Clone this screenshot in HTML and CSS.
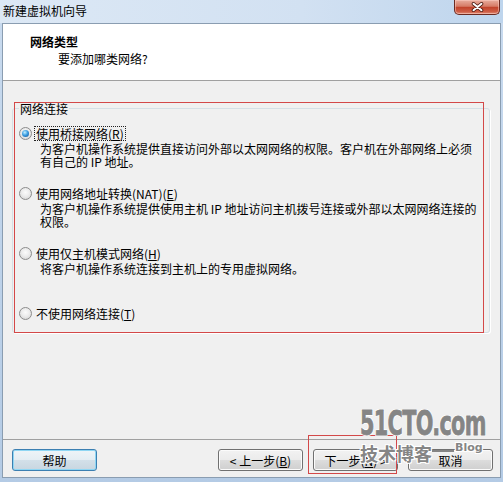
FILE: index.html
```html
<!DOCTYPE html>
<html lang="zh-CN">
<head>
  <meta charset="UTF-8" />
  <title>新建虚拟机向导</title>
  <link rel="stylesheet" href="styles.css">
</head>
<body>
  <div class="window">
    <div class="titlebar">
      <span class="title">新建虚拟机向导</span>
      <span class="close">
        <svg width="13" height="10" viewBox="-6.5 -5 13 10">
          <path d="M-4 -3.2 L4 3.2 M4 -3.2 L-4 3.2" stroke="#4a1a12" stroke-width="3.6" stroke-linecap="round" fill="none"/>
          <path d="M-4 -3.2 L4 3.2 M4 -3.2 L-4 3.2" stroke="#fff" stroke-width="2" stroke-linecap="round" fill="none"/>
        </svg>
      </span>
    </div>

    <div class="client">
      <div class="header">
        <div class="header-title">网络类型</div>
        <div class="header-sub">要添加哪类网络?</div>
      </div>

      <div class="content">
        <fieldset class="group">
          <legend>网络连接</legend>

          <div class="option">
            <div class="option-label">
              <span class="radio checked"></span>
              <span class="label-text focus">使用桥接网络(<u>R</u>)</span>
            </div>
            <div class="option-desc">为客户机操作系统提供直接访问外部以太网网络的权限。客户机在外部网络上必须有自己的 IP 地址。</div>
          </div>

          <div class="option">
            <div class="option-label">
              <span class="radio"></span>
              <span class="label-text">使用网络地址转换(NAT)(<u>E</u>)</span>
            </div>
            <div class="option-desc">为客户机操作系统提供使用主机 IP 地址访问主机拨号连接或外部以太网网络连接的权限。</div>
          </div>

          <div class="option">
            <div class="option-label">
              <span class="radio"></span>
              <span class="label-text">使用仅主机模式网络(<u>H</u>)</span>
            </div>
            <div class="option-desc">将客户机操作系统连接到主机上的专用虚拟网络。</div>
          </div>

          <div class="option last">
            <div class="option-label">
              <span class="radio"></span>
              <span class="label-text">不使用网络连接(<u>T</u>)</span>
            </div>
          </div>
        </fieldset>
      </div>

      <div class="footer">
        <button class="btn default">帮助</button>
        <div class="spacer"></div>
        <button class="btn">&lt; 上一步(<u>B</u>)</button>
        <button class="btn">下一步(<u>N</u>) &gt;</button>
        <button class="btn">取消</button>
      </div>
    </div>

    <!-- annotation boxes drawn over the screenshot -->
    <div class="annot annot-group"></div>
    <div class="annot annot-next"></div>

    <div class="watermark">
      <div class="wm-site">51CTO.com</div>
      <div class="wm-blog"><span class="wm-cn">技术博客</span><span class="wm-dash"></span><span class="wm-en">Blog</span></div>
    </div>
  </div>
</body>
</html>
```

FILE: styles.css
```css
body {
  margin: 0;
  font-family: "Noto Sans CJK SC", sans-serif;
  font-size: 12px;
  color: #000;
}

.window {
  position: relative;
  width: 503px;
  height: 482px;
  display: flex;
  flex-direction: column;
  background: linear-gradient(#c9dbef, #b4cbe5);
  overflow: hidden;
}

.titlebar {
  height: 23px;
  flex: none;
  display: flex;
  justify-content: space-between;
  align-items: flex-start;
  background: linear-gradient(90deg, #dce8f5, #d2e1f2 60%, #bed5ed);
}

.title {
  padding: 3px 0 0 3px;
  line-height: 15px;
}

.close {
  width: 46px;
  height: 15px;
  margin-right: 3px;
  box-sizing: border-box;
  border: 1px solid #6b2a21;
  border-top: none;
  border-radius: 0 0 5px 5px;
  background: linear-gradient(#e8ad9e, #d67b66 45%, #c1432b 52%, #cf5f47 85%, #e39a86);
  box-shadow: inset 0 0 0 1px rgba(255, 210, 200, 0.5);
  display: flex;
  align-items: center;
  justify-content: center;
}

.client {
  flex: 1;
  margin: 0 2px 4px;
  border: 1px solid #8a9db1;
  background: #f0f0f0;
  display: flex;
  flex-direction: column;
}

.header {
  height: 57px;
  box-sizing: border-box;
  background: #fff;
  border-bottom: 1px solid #a0a0a0;
  padding: 10px 0 0 27px;
}

.header-title {
  font-weight: bold;
  line-height: 15px;
}

.header-sub {
  line-height: 15px;
  margin-top: 2px;
  padding-left: 28px;
}

.content {
  flex: 1;
  padding-top: 21px;
}

.group {
  margin: 0 10px 0 9px;
  padding: 10px 6px 11px;
  border: 1px solid #d5dfe5;
  border-radius: 3px;
  box-shadow: 1px 1px 0 #fff;
}

.group legend {
  padding: 0 1px;
  line-height: 13px;
}

.option {
  height: 60px;
}

.option.last {
  height: 16px;
}

.option-label {
  display: flex;
  align-items: center;
  height: 16px;
}

.radio {
  position: relative;
  width: 13px;
  height: 13px;
  box-sizing: border-box;
  border-radius: 50%;
  border: 1px solid #8c8c8c;
  background: radial-gradient(circle at 50% 40%, #fbfbfb 0, #ececec 45%, #cfcfcf 100%);
  margin-right: 2px;
  flex: none;
}

.radio.checked::after {
  content: "";
  position: absolute;
  left: 2px;
  top: 2px;
  width: 7px;
  height: 7px;
  border-radius: 50%;
  background: radial-gradient(circle at 40% 35%, #c4f0ff 0, #3d9fe2 45%, #0c4a8e 100%);
}

.label-text {
  line-height: 13px;
  padding: 0 1px 0 1px;
  border: 1px solid transparent;
}

.label-text.focus {
  border: 1px dotted #222;
}

.option-desc {
  width: 442px;
  padding-left: 21px;
  margin-top: 1px;
  line-height: 13px;
}

.footer {
  height: 38px;
  flex: none;
  box-sizing: border-box;
  border-top: 1px solid #a0a0a0;
  padding: 9px 7px 0 9px;
  display: flex;
  align-items: flex-start;
  gap: 10px;
}

.spacer {
  flex: 1;
}

.btn {
  width: 85px;
  height: 22px;
  padding: 0;
  font: inherit;
  color: #000;
  border: 1px solid #707070;
  border-radius: 3px;
  background: linear-gradient(#f2f2f2, #ebebeb 50%, #dddddd 50%, #cfcfcf);
  box-shadow: inset 0 0 0 1px #fbfbfb;
}

.btn.default {
  border-color: #3c7fb1;
  background: linear-gradient(#eef4f8, #e4edf3 50%, #d3e0e9 50%, #c8d6e0);
  box-shadow: inset 0 0 0 1px #8fd6f3;
}

.annot {
  position: absolute;
  box-sizing: border-box;
  border: 1px solid #d34848;
}

.annot-group {
  left: 14px;
  top: 102px;
  width: 470px;
  height: 231px;
}

.annot-next {
  left: 308px;
  top: 435px;
  width: 89px;
  height: 39px;
}

.watermark {
  position: absolute;
  left: 360px;
  top: 405px;
  color: #858585;
  text-shadow: 1px 1px 0 #fff, -1px -1px 0 #fff, 1px -1px 0 #fff, -1px 1px 0 #fff;
}

.wm-site {
  font-family: "DejaVu Sans Condensed", "DejaVu Sans", sans-serif;
  font-weight: bold;
  font-size: 34px;
  line-height: 36px;
  letter-spacing: -1px;
  -webkit-text-stroke: 0.8px #858585;
  transform: scaleX(0.68);
  transform-origin: left;
  white-space: nowrap;
}

.wm-blog {
  display: flex;
  align-items: flex-start;
  margin-top: 1px;
}

.wm-cn {
  font-weight: bold;
  font-size: 18px;
  line-height: 22px;
}

.wm-dash {
  width: 22px;
  height: 2px;
  margin-top: 8px;
  background: #858585;
}

.wm-en {
  font-family: "DejaVu Sans", sans-serif;
  font-weight: bold;
  font-size: 11px;
  line-height: 12px;
  margin-left: 1px;
}
```
